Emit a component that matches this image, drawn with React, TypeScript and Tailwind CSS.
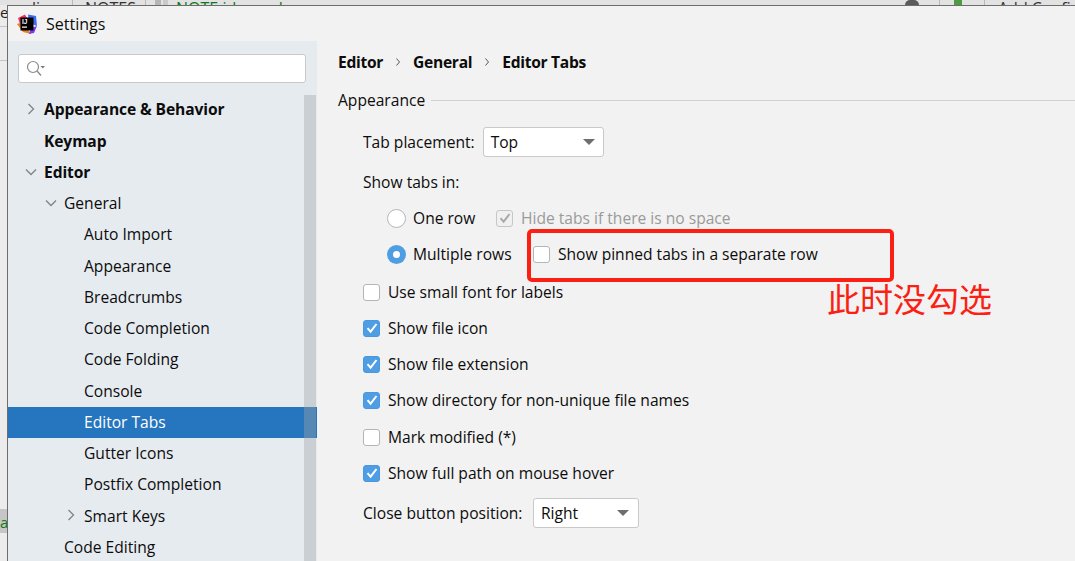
import { ReactNode } from 'react';

const treeItems = [
  { label: 'Appearance & Behavior', level: 0, bold: true, arrow: 'right' },
  { label: 'Keymap', level: 0, bold: true },
  { label: 'Editor', level: 0, bold: true, arrow: 'down' },
  { label: 'General', level: 1, arrow: 'down' },
  { label: 'Auto Import', level: 2 },
  { label: 'Appearance', level: 2 },
  { label: 'Breadcrumbs', level: 2 },
  { label: 'Code Completion', level: 2 },
  { label: 'Code Folding', level: 2 },
  { label: 'Console', level: 2 },
  { label: 'Editor Tabs', level: 2, selected: true },
  { label: 'Gutter Icons', level: 2 },
  { label: 'Postfix Completion', level: 2 },
  { label: 'Smart Keys', level: 2, arrow: 'right' },
  { label: 'Code Editing', level: 1 },
];

const indent = ['pl-[36px]', 'pl-[56px]', 'pl-[76px]'];
const arrowLeft = ['left-[17px]', 'left-[37px]', 'left-[57px]'];

function Arrow({ dir, className }: { dir: string; className: string }) {
  return (
    <svg width="12" height="12" viewBox="0 0 12 12" fill="none" className={className}>
      <path
        d={dir === 'right' ? 'M3.5 1 L8.5 6 L3.5 11' : 'M1 3.5 L6 8.5 L11 3.5'}
        stroke="#7f8487"
        strokeWidth="1.3"
      />
    </svg>
  );
}

function Checkbox({ checked, disabled, className = '' }: { checked?: boolean; disabled?: boolean; className?: string }) {
  if (checked) {
    return (
      <span
        className={`flex h-[17px] w-[17px] shrink-0 items-center justify-center rounded-[3px] border ${
          disabled ? 'border-[#c6c6c6] bg-[#f0f0f0]' : 'border-[#4a96e0] bg-[#4f9ee3]'
        } ${className}`}
      >
        <svg width="12" height="12" viewBox="0 0 12 12" fill="none">
          <path d="M1.5 6.2 L4.6 9.6 L10.5 2" stroke={disabled ? '#a8a8a8' : '#ffffff'} strokeWidth="2" />
        </svg>
      </span>
    );
  }
  return <span className={`h-[17px] w-[17px] shrink-0 rounded-[3px] border border-[#b5b5b5] bg-white ${className}`} />;
}

function CheckRow({ label, checked, className }: { label: string; checked?: boolean; className: string }) {
  return (
    <div className={`flex h-[18px] items-center gap-[8px] pl-[46px] ${className}`}>
      <Checkbox checked={checked} />
      <span className="pt-[2px]">{label}</span>
    </div>
  );
}

function Select({ value, width, padRight }: { value: string; width: string; padRight: string }) {
  return (
    <div className={`flex h-[30px] items-center justify-between rounded-[3px] border border-[#c9c9c9] bg-white pl-[7px] ${padRight} ${width}`}>
      <span className="pt-[2px]">{value}</span>
      <span className="h-0 w-0 border-x-[6px] border-t-[6px] border-x-transparent border-t-[#6e6e6e]" />
    </div>
  );
}

function Radio({ selected }: { selected?: boolean }) {
  if (selected) {
    return (
      <span className="flex h-[19px] w-[19px] shrink-0 items-center justify-center rounded-full bg-[#4f9ee3]">
        <span className="h-[7px] w-[7px] rounded-full bg-white" />
      </span>
    );
  }
  return <span className="h-[19px] w-[19px] shrink-0 rounded-full border border-[#b5b5b5] bg-white" />;
}

function Crumb({ children }: { children: ReactNode }) {
  return <span className="pt-[2px] font-bold tracking-[-0.3px]">{children}</span>;
}

function CrumbArrow() {
  return (
    <svg width="6" height="8" viewBox="0 0 6 8" fill="none" className="mx-[12px]">
      <path d="M1.5 0.5 L4.5 4 L1.5 7.5" stroke="#444444" strokeWidth="0.9" />
    </svg>
  );
}

function AppLogo() {
  return (
    <svg width="20" height="20" viewBox="0 0 20 20" className="shrink-0">
      <path d="M1 4 L8 0.5 L11 6 L4 13 Z" fill="#f0325e" />
      <path d="M11 0.5 L19 2 L20 12 L12 9 Z" fill="#3d6cf0" />
      <path d="M0 10 L6 18 L14 20 L6 8 Z" fill="#f07a2a" />
      <path d="M14 14 L20 12 L17 19 L12 20 Z" fill="#7b3cf0" />
      <rect x="3.5" y="3.5" width="13" height="13" fill="#000000" />
      <text x="5" y="10" fontSize="6.5" fontWeight="700" fill="#ffffff" fontFamily="Liberation Sans, sans-serif">
        IJ
      </text>
      <rect x="5" y="12.5" width="5" height="1.2" fill="#ffffff" />
    </svg>
  );
}

export default function App() {
  return (
    <div className="relative flex h-[561px] w-[1075px] flex-col overflow-hidden whitespace-nowrap bg-[#f2f2f2] text-[15.6px] leading-none text-[#0c0c0c] [font-family:'Open_Sans','Noto_Sans','Noto_Sans_CJK_SC',sans-serif]">
      {/* window behind the dialog, only its edge shows */}
      <div className="flex h-[5px] shrink-0 items-start overflow-hidden bg-[#e2e2e2] text-[16px] text-[#333333]">
        <span className="ml-[32px] w-[40px] shrink-0">li</span>
        <span className="h-full w-px shrink-0 bg-[#b8b8b8]" />
        <span className="ml-[12px] w-[60px] shrink-0">NOTES</span>
        <span className="h-full w-px shrink-0 bg-[#b8b8b8]" />
        <span className="ml-[9px] h-full w-[6px] shrink-0 bg-[#b5b5b5]" />
        <span className="ml-[2px] h-full w-[5px] shrink-0 bg-[#c9c9c9]" />
        <span className="ml-[8px] w-[729px] shrink-0 text-[#0a7a20]">NOTE.idea.md</span>
        <span className="h-full w-[14px] shrink-0 rounded-t-full bg-[#5a5a5a]" />
        <span className="ml-[20px] h-full w-px shrink-0 bg-[#b8b8b8]" />
        <span className="ml-[14px] h-full w-[8px] shrink-0 bg-[#4f9a45]" />
        <span className="ml-[22px] h-full w-px shrink-0 bg-[#b8b8b8]" />
        <span className="ml-[13px] shrink-0">Add Configuration...</span>
      </div>
      <div className="flex min-h-0 flex-1">
        <div className="relative w-[7px] shrink-0 overflow-hidden bg-[#ececec] text-[15px] text-[#222222]">
          <div className="h-[14px]">ea</div>
          <div className="mt-[7px] h-px bg-[#c4c4c4]" />
          <div className="mt-[33px] h-px bg-[#c4c4c4]" />
          <div className="absolute top-[504px] flex h-[24px] w-full items-end bg-[#c6c6c6] pb-[3px] text-[#0a7a20]">
            a
          </div>
        </div>
        <div className="flex min-w-0 flex-1 flex-col border-l border-t border-[#6d6d6d]">
          <div className="flex h-[35px] shrink-0 items-center gap-[9px] pl-[9px]">
            <AppLogo />
            <span className="text-[16px]">Settings</span>
          </div>
          <div className="flex min-h-0 flex-1">
            <div className="relative flex w-[309px] shrink-0 flex-col bg-[#e6ebf0]">
              <div className="ml-[10px] mr-[11px] mt-[13px] flex h-[29px] shrink-0 items-center rounded-[3px] border border-[#c9c9c9] bg-white pl-[7px]">
                <svg width="20" height="18" viewBox="0 0 20 18" fill="none">
                  <circle cx="7" cy="7" r="5.5" stroke="#8a8a8a" strokeWidth="1.2" />
                  <path d="M11 11 L15 15.5" stroke="#8a8a8a" strokeWidth="1.4" />
                  <path d="M14.5 6 L19 6 L16.75 8.5 Z" fill="#7a7a7a" />
                </svg>
              </div>
              <div className="mt-[11px] min-h-0 flex-1">
                {treeItems.map((item) => (
                  <div
                    key={item.label}
                    className={`relative flex h-[31.25px] items-center pt-px ${indent[item.level]} ${
                      item.selected ? 'bg-[#2675bf] text-white' : ''
                    } ${item.bold ? 'font-bold tracking-[-0.1px]' : ''}`}
                  >
                    {item.arrow && (
                      <Arrow dir={item.arrow} className={`absolute top-[9px] ${arrowLeft[item.level]}`} />
                    )}
                    {item.label}
                  </div>
                ))}
              </div>
              {/* scrollbar sits over the tree */}
              <div className="absolute bottom-0 right-px top-[54px] w-[12px] bg-[#a0a4a8]/40" />
            </div>
            <div className="relative min-w-0 flex-1">
              <div className="flex h-[42px] items-center pl-[21px]">
                <Crumb>Editor</Crumb>
                <CrumbArrow />
                <Crumb>General</Crumb>
                <CrumbArrow />
                <Crumb>Editor Tabs</Crumb>
              </div>
              <div className="mt-[9px] flex h-[16px] items-center gap-[6px] pl-[21px]">
                <span className="pt-[2px]">Appearance</span>
                <span className="h-px flex-1 bg-[#d1d1d1]" />
              </div>
              <div className="mt-[19px] flex items-center gap-[8px] pl-[46px]">
                <span className="pt-[2px]">Tab placement:</span>
                <Select value="Top" width="w-[121px]" padRight="pr-[8px]" />
              </div>
              <div className="mt-[17px] h-[16px] pl-[46px] pt-px">Show tabs in:</div>
              <div className="mt-[18px] flex h-[20px] items-center pl-[70px]">
                <Radio />
                <span className="ml-[7px] w-[62px] pt-[2px]">One row</span>
                <Checkbox checked disabled className="ml-[21px]" />
                <span className="ml-[8px] pt-[2px] text-[#9a9a9a]">Hide tabs if there is no space</span>
              </div>
              <div className="mt-[16px] flex h-[20px] items-center pl-[70px]">
                <Radio selected />
                <span className="ml-[7px] w-[100px] pt-[2px]">Multiple rows</span>
                <Checkbox className="ml-[20px]" />
                <span className="ml-[8px] pt-[2px]">Show pinned tabs in a separate row</span>
              </div>
              <CheckRow label="Use small font for labels" className="mt-[19px]" />
              <CheckRow label="Show file icon" checked className="mt-[18px]" />
              <CheckRow label="Show file extension" checked className="mt-[18px]" />
              <CheckRow label="Show directory for non-unique file names" checked className="mt-[18px]" />
              <CheckRow label="Mark modified (*)" className="mt-[19px]" />
              <CheckRow label="Show full path on mouse hover" checked className="mt-[18px]" />
              <div className="mt-[16px] flex items-center gap-[8px] pl-[46px]">
                <span className="w-[162px] pt-[2px]">Close button position:</span>
                <Select value="Right" width="w-[106px]" padRight="pr-[9px]" />
              </div>
            </div>
          </div>
        </div>
      </div>
      {/* red annotation drawn on the screenshot */}
      <div className="absolute left-[527px] top-[229px] h-[53px] w-[367px] rounded-[5px] border-[4px] border-[#fb1f14]" />
      <div className="absolute left-[827px] top-[280px] text-[33px] leading-[36px] text-[#fb1f14] [font-family:'Noto_Sans_CJK_SC',sans-serif]">
        此时没勾选
      </div>
    </div>
  );
}
